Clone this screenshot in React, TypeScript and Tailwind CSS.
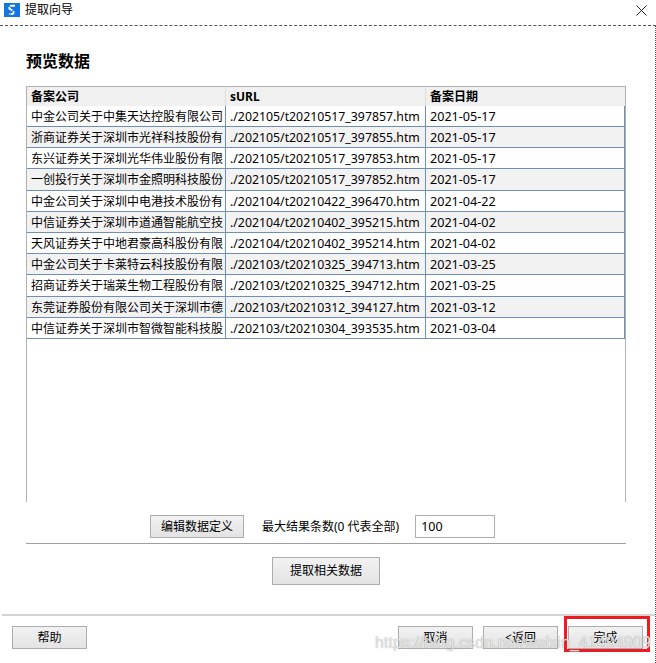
const rows = [
  ["中金公司关于中集天达控股有限公司", "./202105/t20210517_397857.htm", "2021-05-17"],
  ["浙商证券关于深圳市光祥科技股份有", "./202105/t20210517_397855.htm", "2021-05-17"],
  ["东兴证券关于深圳光华伟业股份有限", "./202105/t20210517_397853.htm", "2021-05-17"],
  ["一创投行关于深圳市金照明科技股份", "./202105/t20210517_397852.htm", "2021-05-17"],
  ["中金公司关于深圳中电港技术股份有", "./202104/t20210422_396470.htm", "2021-04-22"],
  ["中信证券关于深圳市道通智能航空技", "./202104/t20210402_395215.htm", "2021-04-02"],
  ["天风证券关于中地君豪高科股份有限", "./202104/t20210402_395214.htm", "2021-04-02"],
  ["中金公司关于卡莱特云科技股份有限", "./202103/t20210325_394713.htm", "2021-03-25"],
  ["招商证券关于瑞莱生物工程股份有限", "./202103/t20210325_394712.htm", "2021-03-25"],
  ["东莞证券股份有限公司关于深圳市德", "./202103/t20210312_394127.htm", "2021-03-12"],
  ["中信证券关于深圳市智微智能科技股", "./202103/t20210304_393535.htm", "2021-03-04"],
];

function WizardButton({ label, className }: { label: string; className: string }) {
  return (
    <button className={`flex items-center justify-center border border-[#adadad] bg-gradient-to-b from-[#f2f2f2] to-[#e3e3e3] text-[12px] text-black ${className}`}>
      {label}
    </button>
  );
}

export default function App() {
  return (
    <div className="relative flex h-[663px] w-[656px] flex-col overflow-hidden bg-white font-['Noto_Sans','Noto_Sans_CJK_SC',sans-serif] text-[12px] text-black">
      {/* Title bar */}
      <div className="flex h-[26px] shrink-0 items-center justify-between border-b border-dashed border-[#555] pb-[5px] pl-1 pr-[9px]">
        <div className="flex items-center gap-[5px]">
          <svg width="16" height="14" viewBox="0 0 16 14">
            <rect width="16" height="14" fill="#1377e0" />
            <path d="M11 2.8H7.2a1.9 1.9 0 0 0-1.6 3L9 8a1.7 1.7 0 0 1-1 3H5" fill="none" stroke="#fff" strokeWidth="1.9" strokeDasharray="5 1" />
          </svg>
          <span>提取向导</span>
        </div>
        <svg width="11" height="11" viewBox="0 0 11 11" stroke="#222" strokeWidth="1">
          <path d="M0.5 0.5l10 10M10.5 0.5l-10 10" />
        </svg>
      </div>

      <div className="flex min-h-0 flex-1 flex-col border-r border-dotted border-[#555]">
        {/* Content */}
        <div className="flex flex-col px-[26px]">
          <h1 className="mt-[22px] h-[26px] text-[16px] leading-[26px] font-bold">预览数据</h1>

          <div className="mt-[12px] flex h-[416px] w-[600px] flex-col border-x border-t border-[#b0b0b0]">
            <div className="grid h-[19px] shrink-0 grid-cols-[199px_200px_1fr] bg-[#f0f0f0] leading-[20px] font-bold">
              <div className="border-r border-[#dcdcdc] pl-1">备案公司</div>
              <div className="border-r border-[#dcdcdc] pl-1">sURL</div>
              <div className="pl-1">备案日期</div>
            </div>
            {rows.map((row, i) => (
              <div
                key={row[1]}
                className={`grid shrink-0 grid-cols-[199px_200px_1fr] border-b border-[#6f8fb5] leading-[21px] ${i === 3 || i === 8 ? "h-[22px]" : "h-[21px]"} ${i % 2 ? "bg-[#f2f2f2]" : "bg-white"}`}
              >
                <div className="border-r border-[#6f8fb5] pl-1 whitespace-nowrap">{row[0]}</div>
                <div className="border-r border-[#6f8fb5] pl-1 text-[12.3px] whitespace-nowrap">{row[1]}</div>
                <div className="border-r border-[#6f8fb5] pl-1 text-[12.6px]">{row[2]}</div>
              </div>
            ))}
          </div>

          <div className="mt-[13px] flex h-[23px] items-center">
            <WizardButton label="编辑数据定义" className="ml-[124px] h-[23px] w-[94px]" />
            <span className="ml-[18px] whitespace-nowrap">最大结果条数(0 代表全部)</span>
            <div className="ml-[16px] h-[23px] w-[80px] border border-[#adadad] pl-[5px] text-[12.5px] leading-[21px]">100</div>
          </div>

          <div className="mt-[5px] h-px w-[600px] bg-[#a0a0a0]" />

          <div className="mt-[13px] flex">
            <WizardButton label="提取相关数据" className="ml-[246px] h-[28px] w-[108px]" />
          </div>
        </div>

        {/* Footer */}
        <div className="mt-[29px] ml-[2px] h-[2px] bg-[#d4d4d4]" />
        <div className="mt-[10px] flex pr-[12px] pl-[12px]">
          <WizardButton label="帮助" className="h-[23px] w-[75px]" />
          <div className="ml-auto flex gap-[10px]">
            <WizardButton label="取消" className="h-[23px] w-[75px]" />
            <WizardButton label="<返回" className="h-[23px] w-[75px]" />
            <WizardButton label="完成" className="h-[23px] w-[75px]" />
          </div>
        </div>
      </div>

      {/* Highlight and watermark lying over the screenshot */}
      <div className="absolute top-[616px] left-[564px] h-[36px] w-[86px] border-[3px] border-[#ed1c24]" />
      <div className="absolute top-[631px] left-[375px] font-['Liberation_Sans',sans-serif] text-[16px] tracking-[0.1px] whitespace-nowrap text-white/75 [text-shadow:0_0_1px_#8a8a8a]">
        https://blog.csdn.net/weixin_41494909
      </div>
    </div>
  );
}
